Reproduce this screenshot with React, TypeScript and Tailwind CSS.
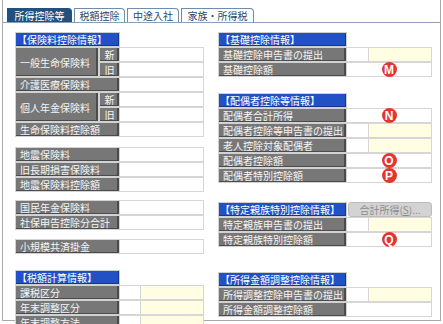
import React from "react";

// ── cell pieces ──
const Header = ({ w, children }: { w: number; children: React.ReactNode }) => (
  <div
    className="h-[15px] bg-[#2251c6] text-white text-[10px] leading-[14px] pl-[1px] whitespace-nowrap border border-[#cfcfcf] shadow-[inset_-1px_-1px_0_#15368c]"
    style={{ width: w }}
  >
    {children}
  </div>
);

const Label = ({ w, h = 15, center, children }: { w: number; h?: number; center?: boolean; children: React.ReactNode }) => (
  <div
    className={`flex items-center bg-[#777777] text-[#f5f5f5] text-[10px] whitespace-nowrap border border-[#d2d2d2] shadow-[inset_-2px_-1px_0_#4b4b4b] ${center ? "justify-center" : "pl-[4px]"}`}
    style={{ width: w, height: h }}
  >
    {children}
  </div>
);

const Mark = ({ ch }: { ch: string }) => (
  <span className="flex items-center justify-center w-[15px] h-[15px] rounded-full bg-[#e4352f] text-white text-[12px] font-bold font-['Liberation_Sans',Arial,sans-serif] leading-none">
    {ch}
  </span>
);

type Kind = "plain" | "split";

const Value = ({ w, kind, mark, small }: { w: number; kind: Kind; mark?: string; small: number }) =>
  kind === "split" ? (
    <div className="flex h-[15px]" style={{ width: w }}>
      <div className="h-full bg-white border-y border-r border-[#d6d6d6]" style={{ width: small }} />
      <div className="h-full flex-1 bg-[#fffde2] border-y border-r border-[#d6d6d6]" />
    </div>
  ) : (
    <div className="h-[15px] flex items-center justify-center bg-white border-y border-r border-[#d6d6d6]" style={{ width: w }}>
      {mark && <Mark ch={mark} />}
    </div>
  );

const Row = ({ lw, vw, sw, label, kind = "plain", mark }: { lw: number; vw: number; sw: number; label: string; kind?: Kind; mark?: string }) => (
  <div className="flex h-[15px]">
    <Label w={lw}>{label}</Label>
    <Value w={vw} kind={kind} mark={mark} small={sw} />
  </div>
);

// left column pair of rows with 新/旧
const PairRow = ({ label }: { label: string }) => (
  <div className="flex h-[30px]">
    <Label w={84} h={30}>{label}</Label>
    <div className="flex flex-col">
      {["新", "旧"].map(s => (
        <div key={s} className="flex h-[15px]">
          <Label w={21} center>{s}</Label>
          <Value w={84} kind="plain" small={21} />
        </div>
      ))}
    </div>
  </div>
);

const L = { lw: 105, vw: 84, sw: 21 };
const R = { lw: 129, vw: 85, sw: 22 };

const TABS = [
  { t: "所得控除等", w: 65, active: true },
  { t: "税額控除", w: 51 },
  { t: "中途入社", w: 52 },
  { t: "家族・所得税", w: 73 },
];

export default function App() {
  return (
    <div className="w-[443px] h-[324px] bg-white overflow-hidden font-['Noto_Sans_CJK_JP','Noto_Sans_CJK_SC',sans-serif]">
      <div className="h-[321px] w-[439px] ml-[2px] border-l border-r border-b border-[#a9a9a9] flex flex-col">
        {/* tabs */}
        <div className="flex items-end gap-[2px] pl-[4px] pt-[8px] border-b border-[#8aa0ba]">
          {TABS.map(tab => (
            <div
              key={tab.t}
              className={`h-[14px] flex items-center justify-center text-[10px] leading-none rounded-tr-[4px] border border-b-0 ${tab.active ? "bg-[#22507f] text-white border-[#22507f]" : "bg-white text-[#29486c] border-[#6f8cab]"}`}
              style={{ width: tab.w }}
            >
              {tab.t}
            </div>
          ))}
        </div>

        <div className="flex pl-[12px] pt-[9px] gap-[14px]">
          {/* left column */}
          <div className="flex flex-col w-[189px]">
            <Header w={105}>【保険料控除情報】</Header>
            <PairRow label="一般生命保険料" />
            <Row {...L} label="介護医療保険料" />
            <PairRow label="個人年金保険料" />
            <Row {...L} label="生命保険料控除額" />

            <div className="mt-[10px]">
              <Row {...L} label="地震保険料" />
              <Row {...L} label="旧長期損害保険料" />
              <Row {...L} label="地震保険料控除額" />
            </div>

            <div className="mt-[8px]">
              <Row {...L} label="国民年金保険料" />
              <Row {...L} label="社保申告控除分合計" />
            </div>

            <div className="mt-[9px]">
              <Row {...L} label="小規模共済掛金" />
            </div>

            <div className="mt-[16px]">
              <Header w={105}>【税額計算情報】</Header>
              <Row {...L} kind="split" label="課税区分" />
              <Row {...L} kind="split" label="年末調整区分" />
              <Row {...L} kind="split" label="年末調整方法" />
            </div>
          </div>

          {/* right column */}
          <div className="flex flex-col w-[214px]">
            <Header w={129}>【基礎控除情報】</Header>
            <Row {...R} kind="split" label="基礎控除申告書の提出" />
            <Row {...R} label="基礎控除額" mark="M" />

            <div className="mt-[16px]">
              <Header w={129}>【配偶者控除等情報】</Header>
              <Row {...R} label="配偶者合計所得" mark="N" />
              <Row {...R} kind="split" label="配偶者控除等申告書の提出" />
              <Row {...R} kind="split" label="老人控除対象配偶者" />
              <Row {...R} label="配偶者控除額" mark="O" />
              <Row {...R} label="配偶者特別控除額" mark="P" />
            </div>

            <div className="mt-[19px]">
              <div className="flex">
                <Header w={129}>【特定親族特別控除情報】</Header>
                <button className="ml-[1px] w-[84px] h-[15px] rounded-[3px] bg-[#d3d3d3] border border-[#bdbdbd] text-[#8c8c8c] text-[10px] leading-none">
                  合計所得(<span className="underline">S</span>)...
                </button>
              </div>
              <Row {...R} kind="split" label="特定親族申告書の提出" />
              <Row {...R} label="特定親族特別控除額" mark="Q" />
            </div>

            <div className="mt-[25px]">
              <Header w={129}>【所得金額調整控除情報】</Header>
              <Row {...R} kind="split" label="所得調整控除申告書の提出" />
              <Row {...R} label="所得金額調整控除額" />
            </div>
          </div>
        </div>
      </div>
    </div>
  );
}
